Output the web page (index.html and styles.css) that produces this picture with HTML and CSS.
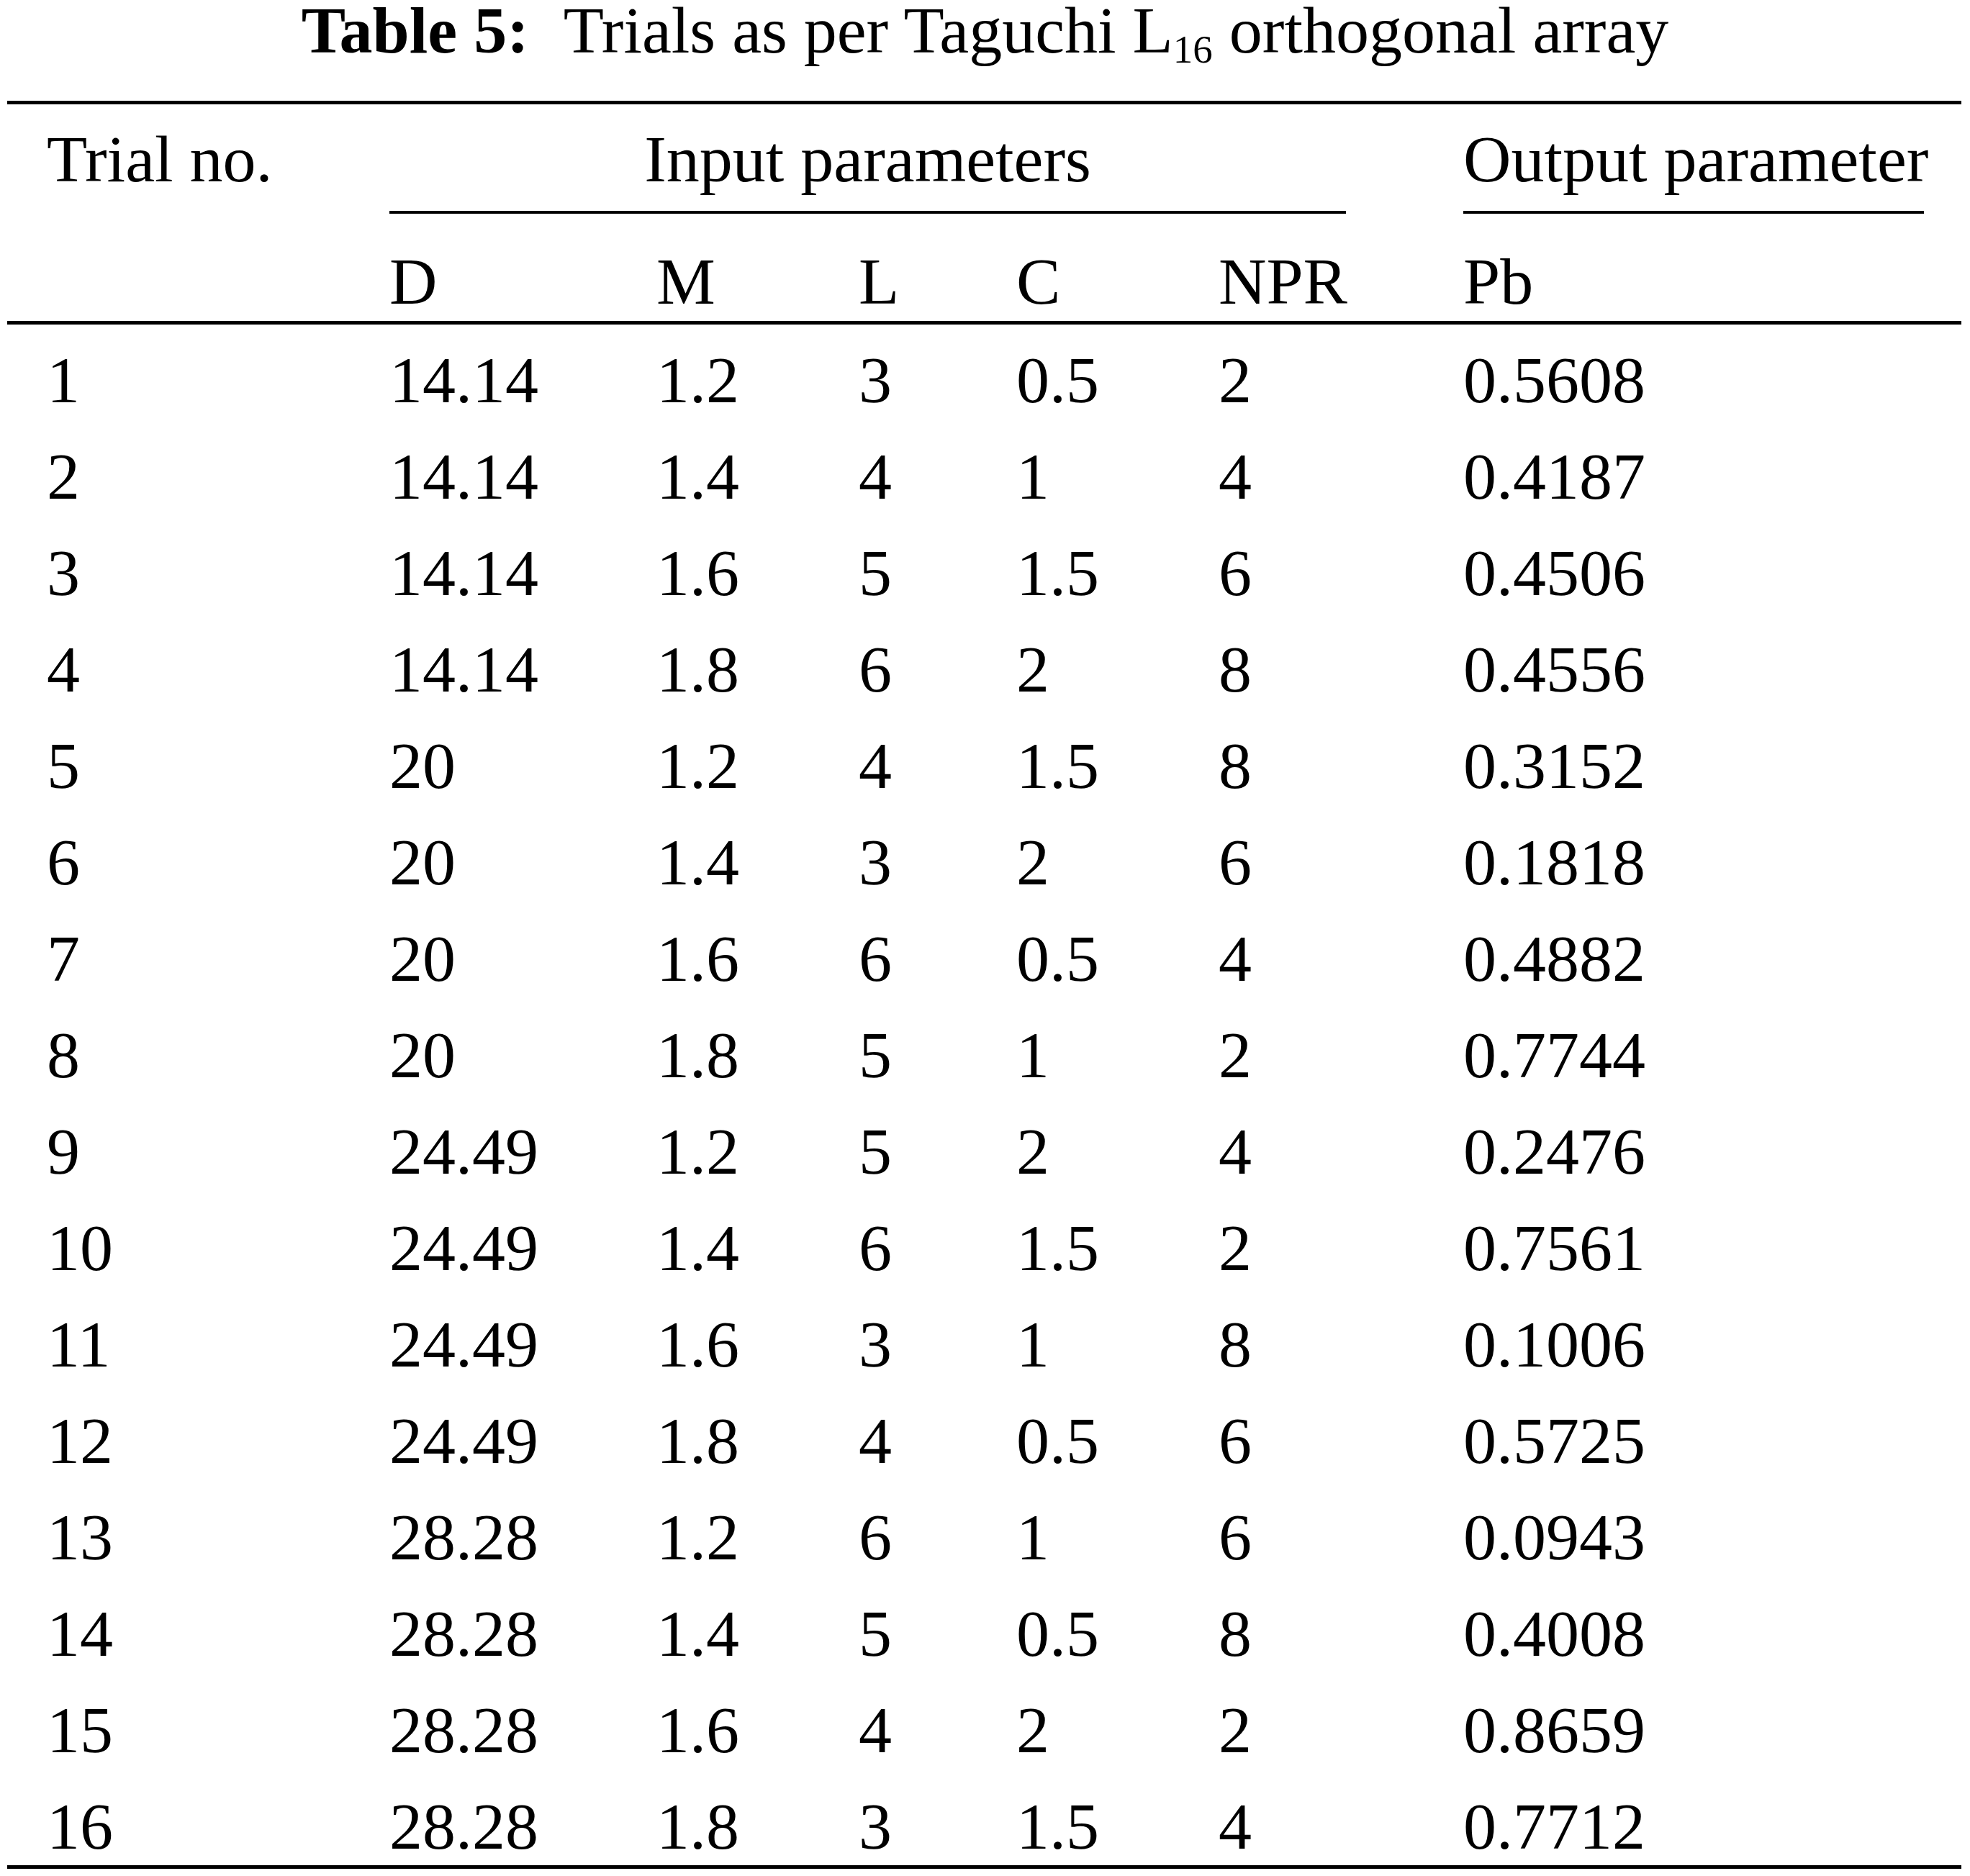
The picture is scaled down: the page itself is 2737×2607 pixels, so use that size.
FILE: index.html
```html
<!DOCTYPE html>
<html lang="en">
<head>
<meta charset="utf-8">
<title>Table 5: Trials as per Taguchi L16 orthogonal array</title>
<link rel="stylesheet" href="styles.css">
</head>
<body>
<div class="page">
  <h1 class="title"><b class="label">Table 5:</b>Trials as per Taguchi L<sub class="sub">16</sub> orthogonal array</h1>
  <table class="trials">
    <colgroup>
      <col class="c1"><col class="c2"><col class="c3"><col class="c4"><col class="c5"><col class="c6"><col class="c7">
    </colgroup>
    <thead>
      <tr class="head1">
        <th class="first">Trial no.</th>
        <th colspan="5" class="group"><div class="rule input">Input parameters</div></th>
        <th class="group"><div class="rule output">Output parameter</div></th>
      </tr>
      <tr class="head2">
        <th class="first"></th>
        <th>D</th><th>M</th><th>L</th><th>C</th><th>NPR</th><th>Pb</th>
      </tr>
    </thead>
    <tbody>
      <tr><td class="first">1</td><td>14.14</td><td>1.2</td><td>3</td><td>0.5</td><td>2</td><td>0.5608</td></tr>
      <tr><td class="first">2</td><td>14.14</td><td>1.4</td><td>4</td><td>1</td><td>4</td><td>0.4187</td></tr>
      <tr><td class="first">3</td><td>14.14</td><td>1.6</td><td>5</td><td>1.5</td><td>6</td><td>0.4506</td></tr>
      <tr><td class="first">4</td><td>14.14</td><td>1.8</td><td>6</td><td>2</td><td>8</td><td>0.4556</td></tr>
      <tr><td class="first">5</td><td>20</td><td>1.2</td><td>4</td><td>1.5</td><td>8</td><td>0.3152</td></tr>
      <tr><td class="first">6</td><td>20</td><td>1.4</td><td>3</td><td>2</td><td>6</td><td>0.1818</td></tr>
      <tr><td class="first">7</td><td>20</td><td>1.6</td><td>6</td><td>0.5</td><td>4</td><td>0.4882</td></tr>
      <tr><td class="first">8</td><td>20</td><td>1.8</td><td>5</td><td>1</td><td>2</td><td>0.7744</td></tr>
      <tr><td class="first">9</td><td>24.49</td><td>1.2</td><td>5</td><td>2</td><td>4</td><td>0.2476</td></tr>
      <tr><td class="first">10</td><td>24.49</td><td>1.4</td><td>6</td><td>1.5</td><td>2</td><td>0.7561</td></tr>
      <tr><td class="first">11</td><td>24.49</td><td>1.6</td><td>3</td><td>1</td><td>8</td><td>0.1006</td></tr>
      <tr><td class="first">12</td><td>24.49</td><td>1.8</td><td>4</td><td>0.5</td><td>6</td><td>0.5725</td></tr>
      <tr><td class="first">13</td><td>28.28</td><td>1.2</td><td>6</td><td>1</td><td>6</td><td>0.0943</td></tr>
      <tr><td class="first">14</td><td>28.28</td><td>1.4</td><td>5</td><td>0.5</td><td>8</td><td>0.4008</td></tr>
      <tr><td class="first">15</td><td>28.28</td><td>1.6</td><td>4</td><td>2</td><td>2</td><td>0.8659</td></tr>
      <tr class="last"><td class="first">16</td><td>28.28</td><td>1.8</td><td>3</td><td>1.5</td><td>4</td><td>0.7712</td></tr>
    </tbody>
  </table>
</div>
</body>
</html>
```

FILE: styles.css
```css
html, body {
  margin: 0;
  padding: 0;
  background: #ffffff;
  color: #000000;
}

.page {
  font-family: "Liberation Serif", "Times New Roman", Times, serif;
  width: 2737px;
  padding-top: 2px;
}

.title {
  margin: 0;
  font-size: 92px;
  font-weight: normal;
  line-height: 80px;
  text-align: center;
  white-space: nowrap;
}

.label {
  font-weight: bold;
  margin-right: 48px;
}

.sub {
  font-size: 55px;
  line-height: 0;
  vertical-align: -14px;
}

.trials {
  margin: 58px 12px 0 10px;
  width: 2715px;
  border-collapse: separate;
  border-spacing: 0;
  table-layout: fixed;
  font-size: 92px;
  line-height: 102px;
}

.c1 { width: 531px; }
.c2 { width: 371px; }
.c3 { width: 281px; }
.c4 { width: 219px; }
.c5 { width: 281px; }
.c6 { width: 340px; }
.c7 { width: 692px; }

.trials th,
.trials td {
  padding: 0;
  text-align: left;
  font-weight: normal;
  white-space: nowrap;
  vertical-align: top;
}

.trials .first {
  padding-left: 55px;
}

.head1 th {
  border-top: 5px solid #000;
  padding-top: 25px;
}

.rule {
  padding-bottom: 21px;
  border-bottom: 4px solid #000;
}

.rule.input {
  margin-right: 163px;
  text-align: center;
}

.rule.output {
  margin-right: 52px;
}

.head2 th {
  padding-top: 43px;
  padding-bottom: 4px;
  border-bottom: 5px solid #000;
}

.trials td {
  padding-top: 26px;
  padding-bottom: 6px;
}

.trials .last td {
  padding-bottom: 3px;
  border-bottom: 5px solid #000;
}
```
